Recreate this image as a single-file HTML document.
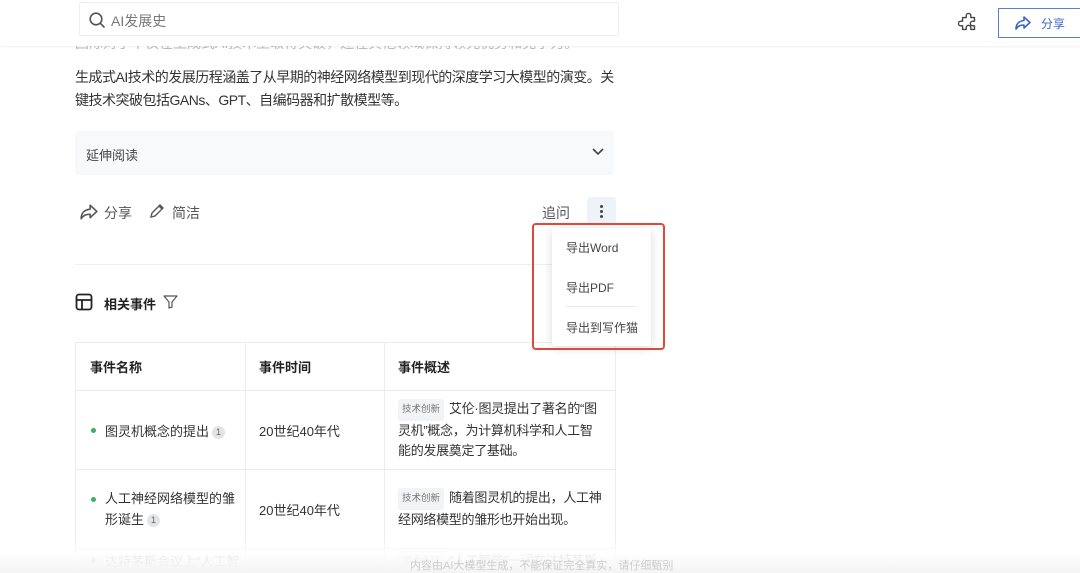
<!DOCTYPE html>
<html><head><meta charset="utf-8"><style>
*{margin:0;padding:0;box-sizing:border-box}
html,body{width:1080px;height:573px;overflow:hidden}
body{background:#fff;font-family:"Liberation Sans","Noto Sans CJK SC",sans-serif;color:#333;position:relative}
.abs{position:absolute}
.t{font-size:14px;white-space:nowrap}
table{border-collapse:collapse;table-layout:fixed}
td{border:1px solid #ececec;vertical-align:middle;font-size:13px;color:#333}
.tag{display:inline-block;background:#f2f3f5;color:#777;font-size:9.5px;padding:1px 4px;border-radius:3px;margin-right:5px;vertical-align:1px;letter-spacing:0}
.n{display:inline-block;width:13px;height:13px;border-radius:7px;background:#e3e4e6;color:#666;font-size:9px;text-align:center;line-height:13px;vertical-align:1px;margin-left:3px}
.dot{display:inline-block;width:5px;height:5px;border-radius:3px;background:#3cae6a;position:absolute;left:15px}
.d{padding:0 10px 0 13px;line-height:20px;letter-spacing:-0.3px}
</style></head><body>
<div class="abs" style="left:0;top:0;width:1080px;height:46px;background:#fff;box-shadow:0 1px 2px rgba(0,0,0,.06);z-index:3"></div>
<div class="abs t" style="left:75px;top:33px;color:#bbb;z-index:2">国际对手不仅在生成式AI技术上取得突破，还在其他领域保持领先优势和竞争力。</div>
<div class="abs" style="left:79px;top:2px;width:540px;height:34px;border:1px solid #eee;background:#fff;z-index:4;border-radius:2px">
<svg class="abs" style="left:8px;top:8px" width="18" height="18" viewBox="0 0 18 18"><circle cx="8" cy="8" r="5.8" fill="none" stroke="#555" stroke-width="1.6"/><path d="M12.2 12.2L16 16" stroke="#555" stroke-width="1.6" stroke-linecap="round"/></svg>
<div class="abs t" style="left:31px;top:8px;color:#777">AI发展史</div></div>
<svg class="abs" style="left:958px;top:12px;z-index:4" width="22" height="22" viewBox="0 0 24 24" fill="none" stroke="#444" stroke-width="1.5" stroke-linejoin="round"><path d="M9 4a2.5 2.5 0 0 1 5 0v2h4v4h-2a2.5 2.5 0 0 0 0 5h2v4h-4v-2a2.5 2.5 0 0 0-5 0v2H5v-4H3a2.5 2.5 0 0 1 0-5h2V6h4z"/></svg>
<div class="abs" style="left:998px;top:8px;width:84px;height:30px;border:1px solid #5b7fd6;z-index:4;background:#fff">
<svg class="abs" style="left:16px;top:7px" width="16" height="14" viewBox="0 0 16 14" fill="none" stroke="#3c64c8" stroke-width="1.6" stroke-linejoin="round"><path d="M9 1l6 5.5-6 5.5V9C5 9 3 10 1 13c0-5 3-8 8-8.5z"/></svg>
<div class="abs" style="left:42px;top:6px;font-size:12px;color:#3c64c8">分享</div></div>
<div class="abs" style="left:75px;top:66px;width:545px;font-size:14px;line-height:23px;color:#333;letter-spacing:-0.5px">生成式AI技术的发展历程涵盖了从早期的神经网络模型到现代的深度学习大模型的演变。关键技术突破包括GANs、GPT、自编码器和扩散模型等。</div>
<div class="abs" style="left:75px;top:131px;width:539px;height:44px;background:#f8f9fb;border-radius:4px">
<div class="abs" style="left:11px;top:14px;font-size:13px;color:#444">延伸阅读</div>
<svg class="abs" style="left:516px;top:16px" width="14" height="10" viewBox="0 0 14 10"><path d="M2 2l5 5 5-5" fill="none" stroke="#444" stroke-width="1.6"/></svg></div>
<svg class="abs" style="left:80px;top:204px" width="18" height="16" viewBox="0 0 16 14" fill="none" stroke="#555" stroke-width="1.4" stroke-linejoin="round"><path d="M9 1l6 5.5-6 5.5V9C5 9 3 10 1 13c0-5 3-8 8-8.5z"/></svg>
<div class="abs t" style="left:104px;top:203px;color:#555">分享</div>
<svg class="abs" style="left:148px;top:202px" width="18" height="18" viewBox="0 0 18 18" fill="none" stroke="#555" stroke-width="1.4"><path d="M3 15l1-4 8-8 3 3-8 8z M11 4l3 3"/></svg>
<div class="abs t" style="left:172px;top:203px;color:#555">简洁</div>
<div class="abs t" style="left:542px;top:203px;color:#555">追问</div>
<div class="abs" style="left:587px;top:197px;width:29px;height:28px;background:#eef3fa;border-radius:3px">
<div class="abs" style="left:13px;top:8px;width:3px;height:3px;background:#444;border-radius:2px"></div>
<div class="abs" style="left:13px;top:13px;width:3px;height:3px;background:#444;border-radius:2px"></div>
<div class="abs" style="left:13px;top:18px;width:3px;height:3px;background:#444;border-radius:2px"></div></div>
<div class="abs" style="left:75px;top:264px;width:540px;height:1px;background:#efefef"></div>
<svg class="abs" style="left:75px;top:293px" width="18" height="18" viewBox="0 0 18 18" fill="none" stroke="#222" stroke-width="1.8"><rect x="1.5" y="1.5" width="15" height="15" rx="2.5"/><path d="M1.5 7h15M7 7v9.5"/></svg>
<div class="abs" style="left:104px;top:294px;font-size:13px;font-weight:bold;color:#222">相关事件</div>
<svg class="abs" style="left:163px;top:295px" width="15" height="14" viewBox="0 0 15 14" fill="none" stroke="#555" stroke-width="1.2" stroke-linejoin="round"><path d="M1 1h13L9 7v5l-3 1V7z"/></svg>
<table class="abs" style="left:75px;top:342px;width:541px">
<tr style="height:48px"><td style="width:170px;padding-left:14px;font-weight:bold;color:#222">事件名称</td><td style="width:139px;padding-left:13px;font-weight:bold;color:#222">事件时间</td><td style="padding-left:13px;font-weight:bold;color:#222">事件概述</td></tr>
<tr style="height:79px"><td style="position:relative;padding-left:29px"><span class="dot" style="top:37px"></span>图灵机概念的提出<span class="n">1</span></td><td style="padding-left:13px">20世纪40年代</td><td class="d"><span class="tag">技术创新</span>艾伦·图灵提出了著名的“图灵机”概念，为计算机科学和人工智能的发展奠定了基础。</td></tr>
<tr style="height:79px"><td style="position:relative;padding-left:29px;line-height:21px"><span class="dot" style="top:27px"></span>人工神经网络模型的雏形诞生<span class="n">1</span></td><td style="padding-left:13px">20世纪40年代</td><td class="d"><span class="tag">技术创新</span>随着图灵机的提出，人工神经网络模型的雏形也开始出现。</td></tr>
<tr style="height:40px"><td style="position:relative;padding-left:29px;vertical-align:top;padding-top:2px;white-space:nowrap;overflow:hidden"><span class="dot" style="top:9px"></span>达特茅斯会议上“人工智</td><td></td><td class="d" style="vertical-align:top;padding-top:2px;white-space:nowrap;overflow:hidden"><span class="tag">学术会议</span>“人工智能”一词在达特茅斯</td></tr>
</table>
<div class="abs" style="left:0;top:540px;width:1080px;height:33px;background:linear-gradient(rgba(255,255,255,0),rgba(255,255,255,.9) 40%,#f4f4f4);z-index:2"></div>
<div class="abs" style="left:410px;top:557px;font-size:11px;color:#ccc;z-index:3;white-space:nowrap">内容由AI大模型生成，不能保证完全真实，请仔细甄别</div>
<div class="abs" style="left:532px;top:223px;width:133px;height:127px;border:2px solid #e0493a;border-radius:4px;z-index:5"></div>
<div class="abs" style="left:552px;top:228px;width:99px;height:118px;background:#fff;box-shadow:0 2px 10px rgba(0,0,0,.15);border-radius:3px;z-index:4">
<div class="abs" style="left:14px;top:11px;font-size:12px;color:#444">导出Word</div>
<div class="abs" style="left:14px;top:51px;font-size:12px;color:#444">导出PDF</div>
<div class="abs" style="left:14px;top:78px;width:70px;height:1px;background:#e8e8e8"></div>
<div class="abs" style="left:14px;top:91px;font-size:12px;color:#444;white-space:nowrap">导出到写作猫</div></div>
</body></html>
